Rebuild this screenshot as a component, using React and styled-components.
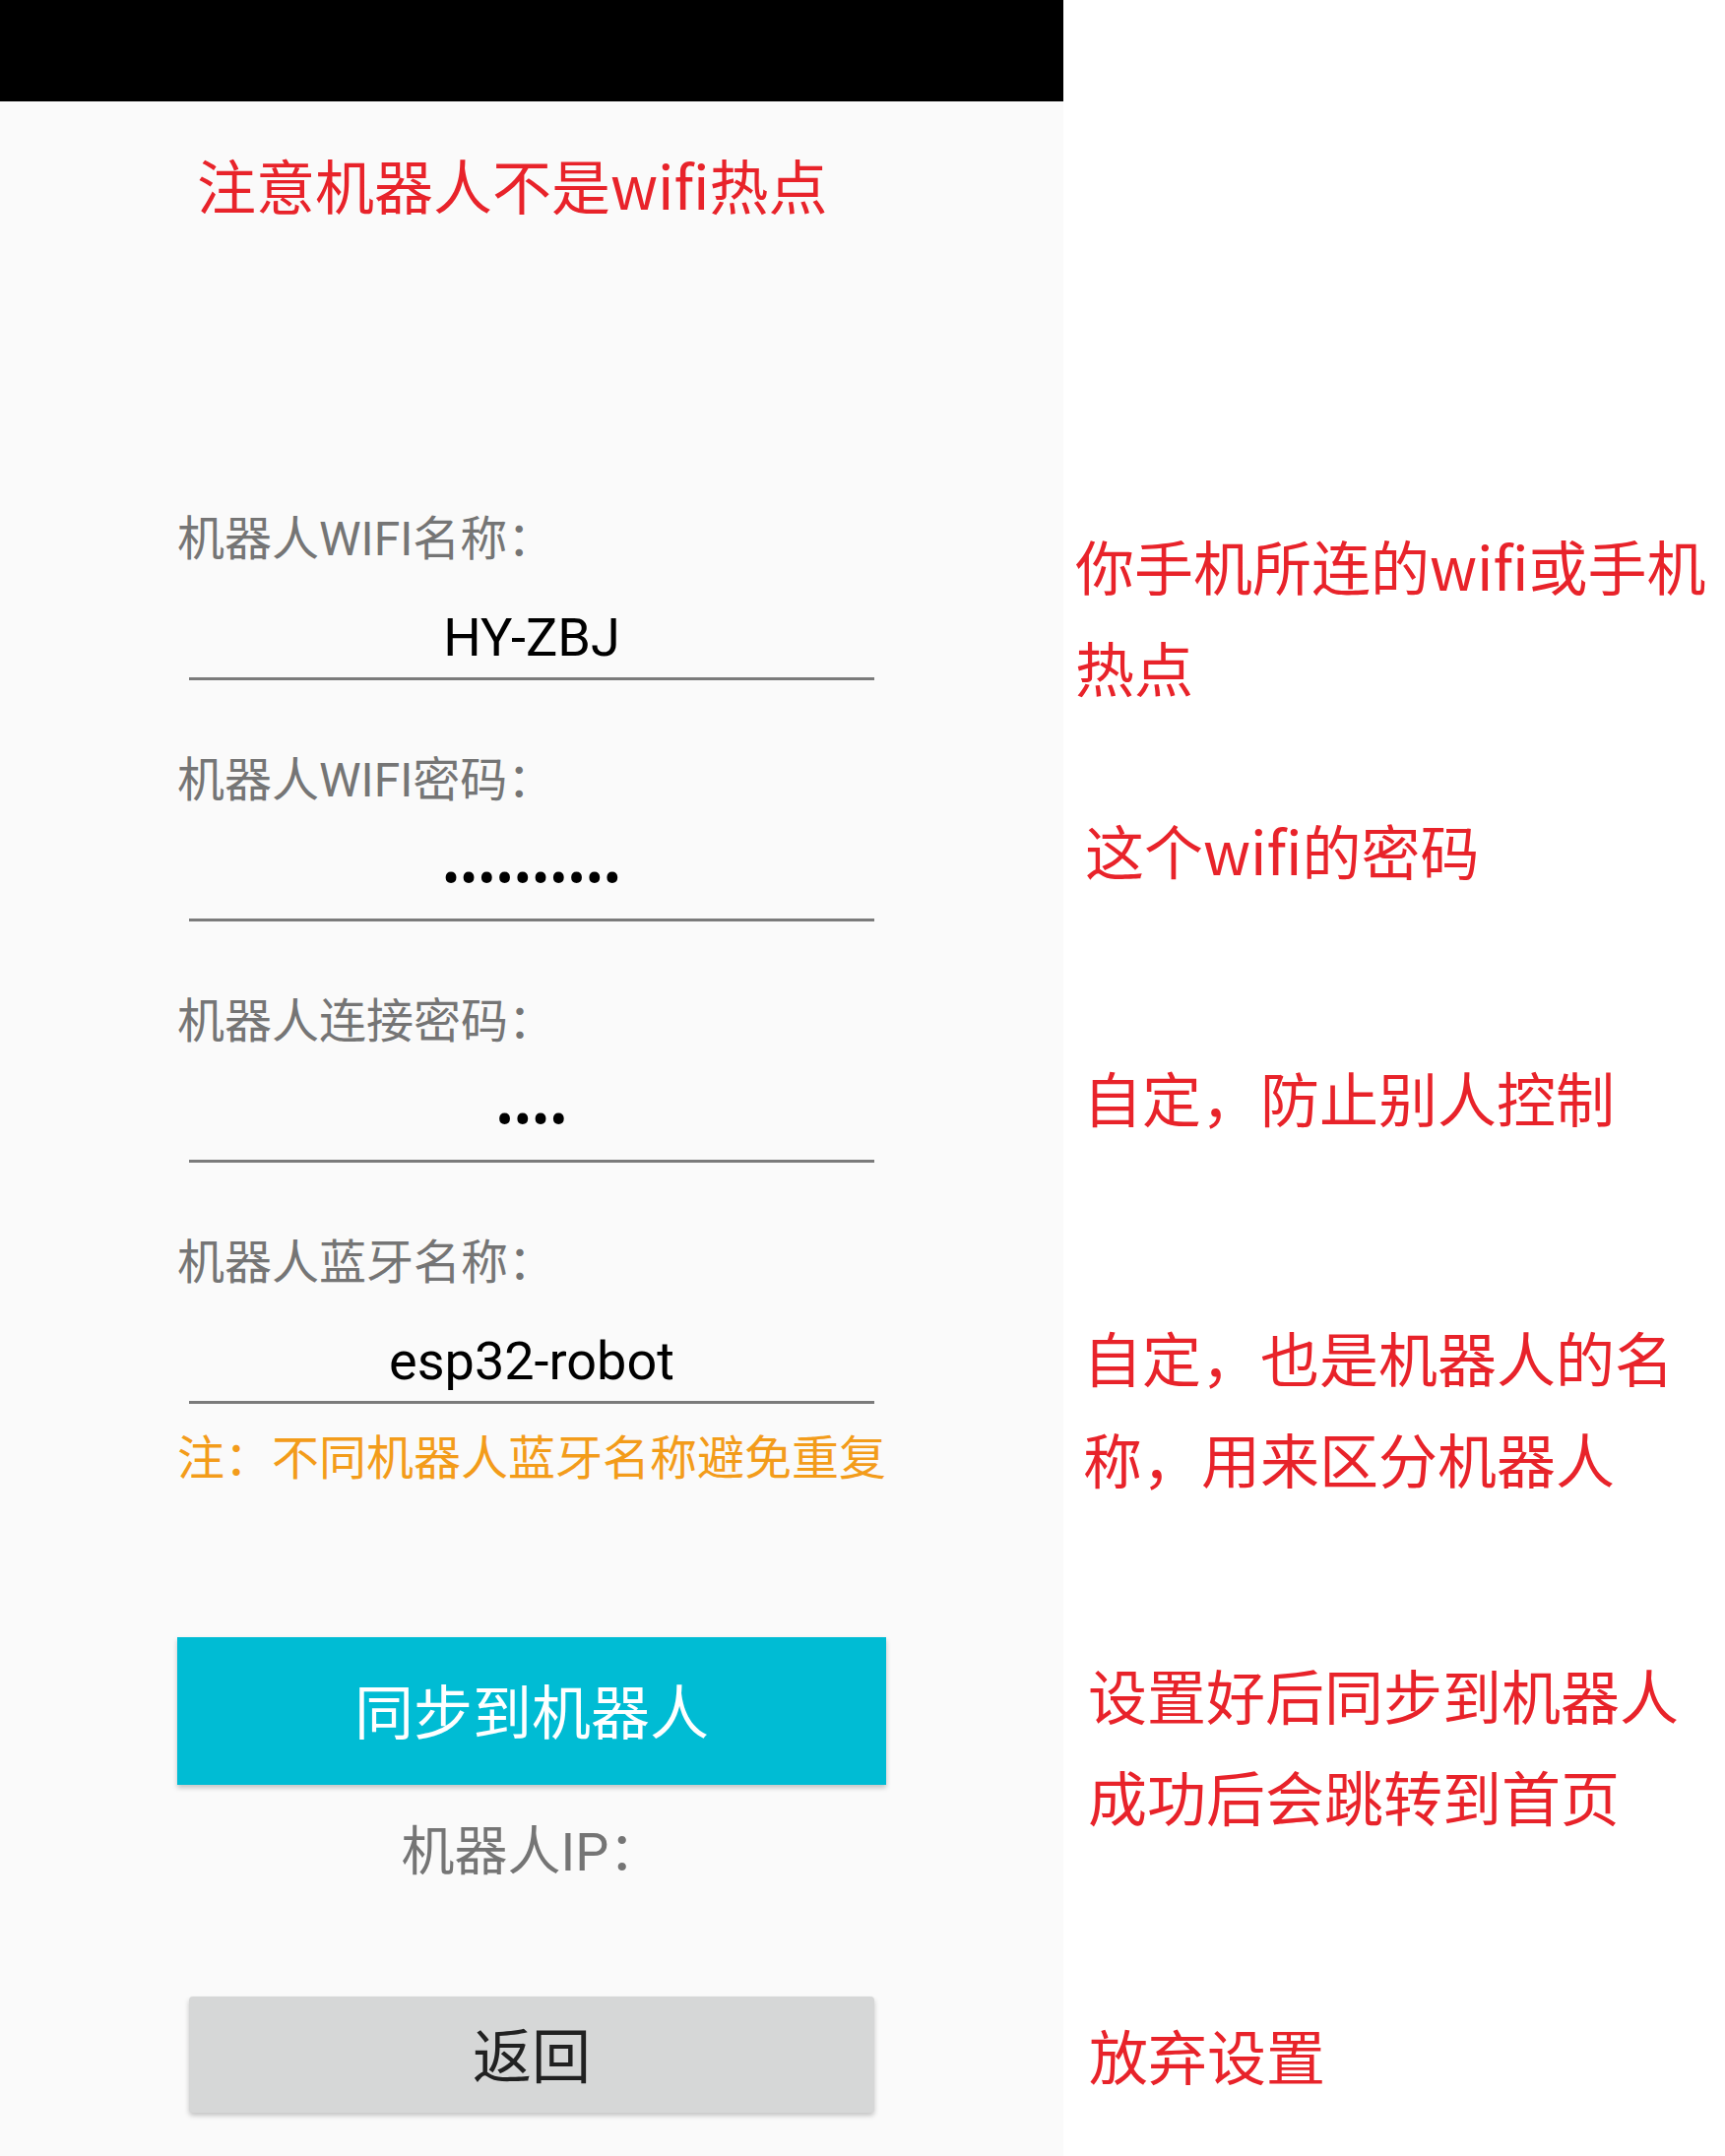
import styled, { createGlobalStyle } from 'styled-components'

const GlobalStyle = createGlobalStyle`
    body {
        margin : 0;
        background : #ffffff;
    }
`

const Page = styled.div`
    display : flex;
    width : 1752px;
    min-height : 2190px;
    background : #ffffff;
`

const Phone = styled.div`
    width : 1080px;
    flex-shrink : 0;
    background : #fafafa;
    display : flex;
    flex-direction : column;
    font-family : Roboto, "Noto Sans CJK SC", sans-serif;
`

const StatusBar = styled.div`
    height : 103px;
    background : #000000;
`

const Title = styled.div`
    margin : 54px 0 0 200px;
    font-family : "Noto Sans CJK SC", sans-serif;
    font-size : 60px;
    line-height : 60px;
    color : #e8232a;
    white-space : nowrap;
`

const Form = styled.div`
    width : 720px;
    margin : 307px auto 0;
    display : flex;
    flex-direction : column;
`

const Fields = styled.div`
    display : flex;
    flex-direction : column;
    gap : 78px;
`

const Field = styled.div`
    display : flex;
    flex-direction : column;
`

const Label = styled.div`
    font-size : 48px;
    line-height : 48px;
    color : #757575;
    white-space : nowrap;
`

const Input = styled.div`
    margin : 44px 12px 0;
    height : 64px;
    padding-bottom : 8px;
    border-bottom : 3px solid #7b7b7b;
    font-family : Roboto, sans-serif;
    font-size : 54px;
    line-height : 64px;
    color : #000000;
    text-align : center;
`

const Hint = styled.div`
    margin-top : 32px;
    font-size : 48px;
    line-height : 48px;
    color : #f39c1a;
    white-space : nowrap;
`

const SyncButton = styled.div`
    margin-top : 157px;
    height : 150px;
    padding-bottom : 6px;
    box-sizing : border-box;
    background : #00bcd4;
    color : #ffffff;
    font-size : 60px;
    display : flex;
    align-items : center;
    justify-content : center;
    box-shadow : 0 3px 5px rgba(0, 0, 0, 0.22);
`

const IpLabel = styled.div`
    margin-top : 42px;
    font-size : 54px;
    line-height : 54px;
    color : #757575;
    text-align : center;
`

const BackButton = styled.div`
    margin : 119px 12px 0;
    height : 118px;
    padding-bottom : 6px;
    box-sizing : border-box;
    background : #d6d7d7;
    border-radius : 4px;
    color : #212121;
    font-size : 60px;
    display : flex;
    align-items : center;
    justify-content : center;
    box-shadow : 0 3px 5px rgba(0, 0, 0, 0.22);
`

const Notes = styled.div`
    flex : 1;
    display : flex;
    flex-direction : column;
    font-family : "Noto Sans CJK SC", sans-serif;
`

const Note = styled.div`
    margin-top : ${p => p.$top}px;
    padding-left : ${p => p.$indent}px;
    font-size : 60px;
    line-height : 103px;
    color : #e8232a;
    white-space : nowrap;
`

const fields = [
    { label : '机器人WIFI名称：', value : 'HY-ZBJ' },
    { label : '机器人WIFI密码：', value : '••••••••••' },
    { label : '机器人连接密码：', value : '••••' },
    { label : '机器人蓝牙名称：', value : 'esp32-robot' },
]

const notes = [
    { top : 522, indent : 12, lines : ['你手机所连的wifi或手机', '热点'] },
    { top : 83, indent : 22, lines : ['这个wifi的密码'] },
    { top : 148, indent : 20, lines : ['自定，防止别人控制'] },
    { top : 161, indent : 20, lines : ['自定，也是机器人的名', '称，用来区分机器人'] },
    { top : 137, indent : 25, lines : ['设置好后同步到机器人', '成功后会跳转到首页'] },
    { top : 160, indent : 26, lines : ['放弃设置'] },
]

export default function App() {

    return (
        <Page>
            <GlobalStyle />

            <Phone>
                <StatusBar />
                <Title>注意机器人不是wifi热点</Title>

                <Form>
                    <Fields>
                        {fields.map(f => (
                            <Field key={f.label}>
                                <Label>{f.label}</Label>
                                <Input>{f.value}</Input>
                            </Field>
                        ))}
                    </Fields>

                    <Hint>注：不同机器人蓝牙名称避免重复</Hint>

                    <SyncButton>同步到机器人</SyncButton>
                    <IpLabel>机器人IP：</IpLabel>
                    <BackButton>返回</BackButton>
                </Form>
            </Phone>

            <Notes>
                {notes.map((n, i) => (
                    <Note key={i} $top={n.top} $indent={n.indent}>
                        {n.lines.map(l => <div key={l}>{l}</div>)}
                    </Note>
                ))}
            </Notes>
        </Page>
    )
}
